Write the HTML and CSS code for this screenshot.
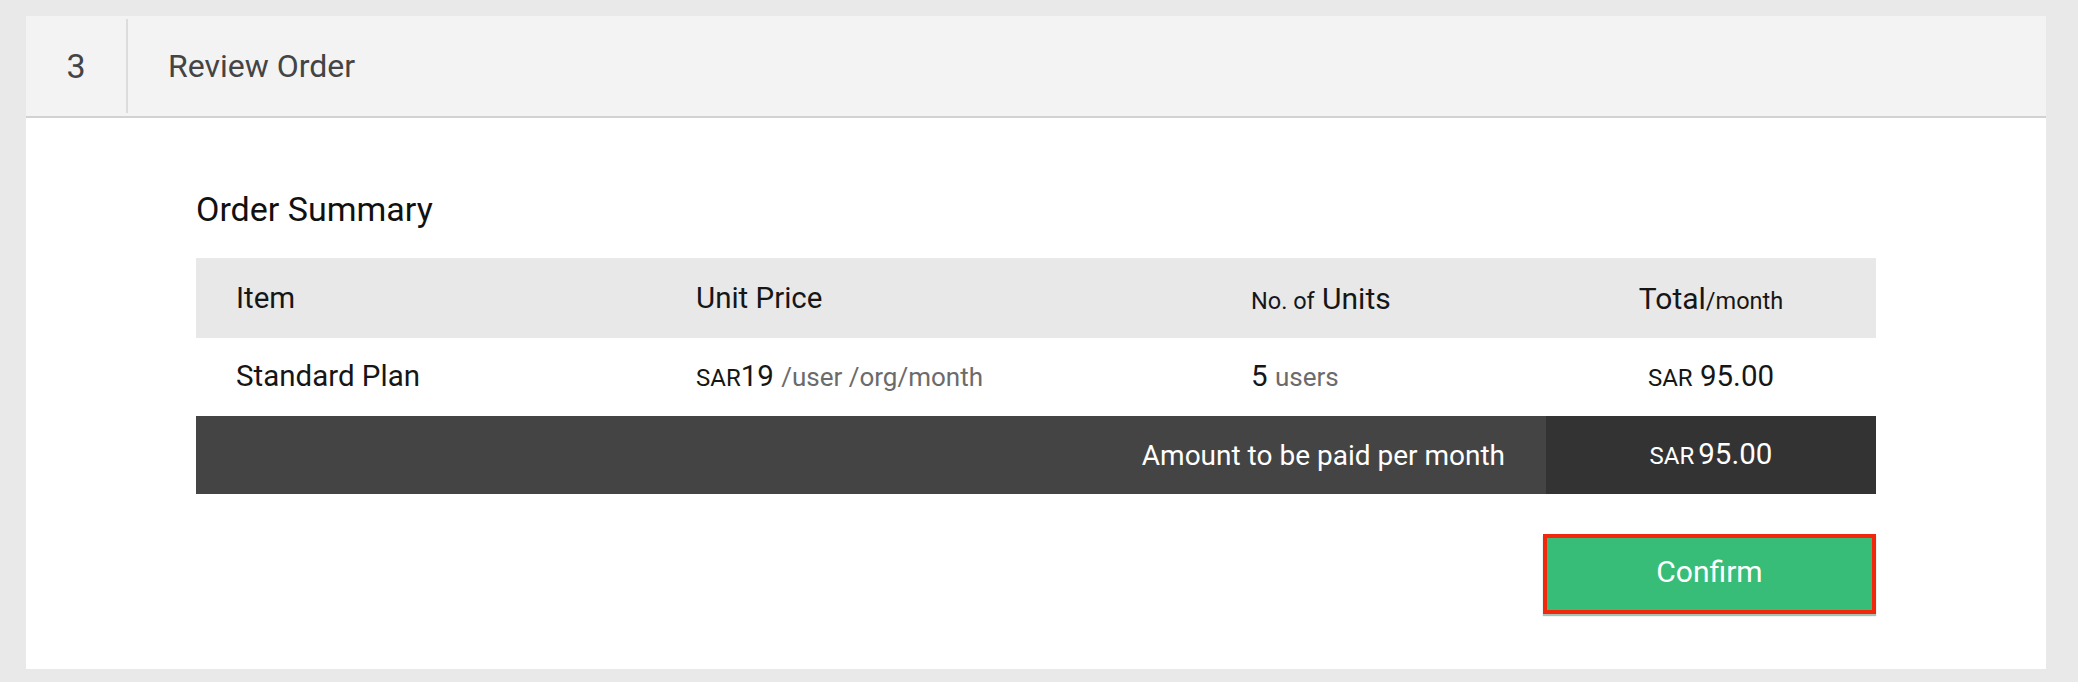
FILE: index.html
```html
<!DOCTYPE html>
<html lang="en">
<head>
<meta charset="utf-8">
<title>Review Order</title>
<link rel="stylesheet" href="styles.css">
</head>
<body>
<section class="card">
  <header class="step-head">
    <div class="step-num">3</div>
    <div class="step-divider"></div>
    <h2 class="step-title">Review Order</h2>
  </header>
  <div class="step-body">
    <h3 class="summary-title">Order Summary</h3>
    <div class="order-table">
      <div class="row row-head">
        <div class="cell">Item</div>
        <div class="cell">Unit Price</div>
        <div class="cell"><span class="small">No. of</span>&nbsp;<span class="big">Units</span></div>
        <div class="cell cell-center"><span class="big">Total</span><span class="small">/month</span></div>
      </div>
      <div class="row row-body">
        <div class="cell">Standard Plan</div>
        <div class="cell"><span class="cur">SAR</span><span class="num">19</span>&nbsp;<span class="muted">/user /org/month</span></div>
        <div class="cell"><span class="num">5</span>&nbsp;<span class="muted">users</span></div>
        <div class="cell cell-center"><span class="cur">SAR</span>&nbsp;<span class="num">95.00</span></div>
      </div>
      <div class="row-foot">
        <div class="foot-label">Amount to be paid per month</div>
        <div class="foot-total"><span class="cur">SAR</span>&nbsp;<span class="num">95.00</span></div>
      </div>
    </div>
    <div class="actions">
      <button class="btn-confirm" type="button">Confirm</button>
    </div>
  </div>
</section>
</body>
</html>
```
FILE: styles.css
```css
html, body {
  margin: 0;
  padding: 0;
}
body {
  background: #e9e9e9;
  font-family: Roboto, "Liberation Sans", Arial, sans-serif;
  padding: 16px 0 12px 26px;
  color: #161616;
}
.card {
  width: 2020px;
  background: #ffffff;
}
.step-head {
  display: flex;
  align-items: center;
  height: 100px;
  background: #f3f3f3;
  border-bottom: 2px solid #d2d2d2;
}
.step-num {
  width: 100px;
  text-align: center;
  font-size: 34px;
  color: #444444;
}
.step-divider {
  width: 2px;
  height: 94px;
  background: #dcdcdc;
}
.step-title {
  margin: 0 0 0 40px;
  font-size: 32px;
  font-weight: 400;
  color: #444444;
}
.step-body {
  padding: 71px 170px 55px;
}
.summary-title {
  margin: 0 0 29px;
  font-size: 34px;
  line-height: 40px;
  font-weight: 400;
  color: #111111;
}
.order-table {
  width: 1680px;
}
.row {
  display: grid;
  grid-template-columns: 460px 555px 335px 330px;
}
.row-head {
  height: 80px;
  background: #e8e8e8;
}
.row-body {
  height: 78px;
}
.cell {
  display: flex;
  align-items: baseline;
  align-self: center;
  padding-left: 40px;
  font-size: 29.5px;
  white-space: nowrap;
}
.row-body .cell {
  margin-top: -2px;
}
.cell-center {
  justify-content: center;
  padding-left: 0;
}
.small {
  font-size: 23.5px;
}
.big {
  font-size: 30px;
}
.cur {
  font-size: 24px;
}
.num {
  font-size: 29.5px;
}
.muted {
  font-size: 26px;
  color: #6b6b6b;
}
.row-foot {
  display: grid;
  grid-template-columns: 1fr 330px;
  height: 78px;
}
.foot-label {
  display: flex;
  align-items: center;
  justify-content: flex-end;
  padding-right: 41px;
  background: #444444;
  color: #ffffff;
  font-size: 28px;
}
.foot-total {
  display: flex;
  align-items: baseline;
  justify-content: center;
  align-self: stretch;
  background: #333333;
  color: #ffffff;
  padding-top: 21px;
  box-sizing: border-box;
}
.actions {
  display: flex;
  justify-content: flex-end;
  margin-top: 40px;
}
.btn-confirm {
  width: 333px;
  height: 80px;
  background: #38bd78;
  border: 4px solid #f2280c;
  box-shadow: 0 2px 1px rgba(0, 80, 40, 0.35);
  color: #ffffff;
  font-family: Roboto, "Liberation Sans", Arial, sans-serif;
  font-size: 30px;
  padding: 0 0 6px;
  cursor: pointer;
}
```
